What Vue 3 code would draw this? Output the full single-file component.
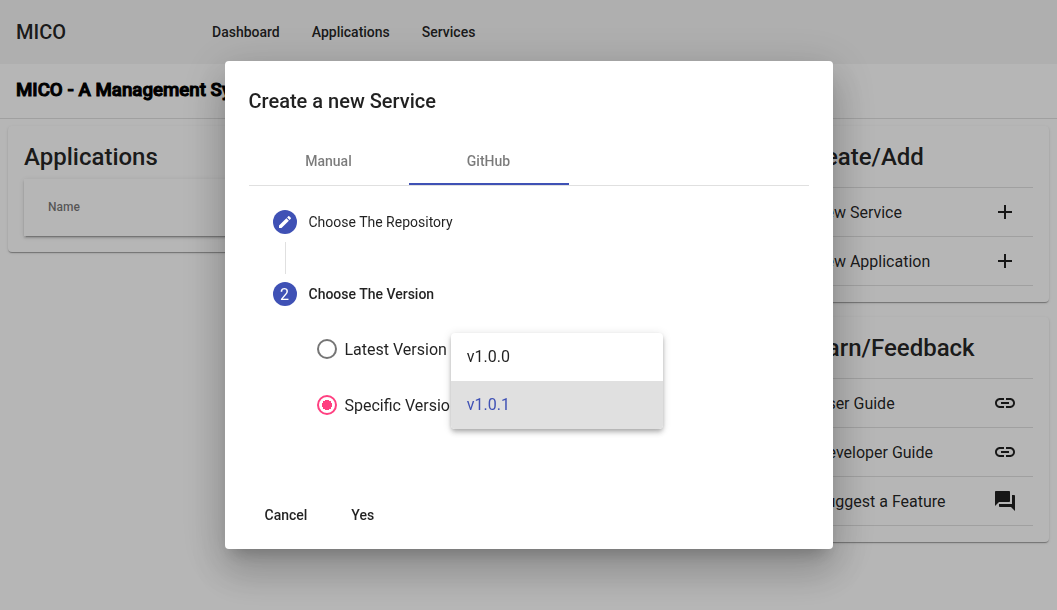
<script setup>
import { ref } from 'vue'

const navItems = ['Dashboard', 'Applications', 'Services']
const createItems = ['New Service', 'New Application']
const learnItems = [
  { text: 'User Guide', icon: 'link' },
  { text: 'Developer Guide', icon: 'link' },
  { text: 'Suggest a Feature', icon: 'forum' },
]
const icons = {
  link: 'M3.9 12c0-1.71 1.39-3.1 3.1-3.1h4V7H7c-2.76 0-5 2.24-5 5s2.24 5 5 5h4v-1.9H7c-1.71 0-3.1-1.39-3.1-3.1zM8 13h8v-2H8v2zm9-6h-4v1.9h4c1.71 0 3.1 1.39 3.1 3.1s-1.39 3.1-3.1 3.1h-4V17h4c2.76 0 5-2.24 5-5s-2.24-5-5-5z',
  forum: 'M21 6h-2v9H6v2c0 .55.45 1 1 1h11l4 4V7c0-.55-.45-1-1-1zm-4 6V3c0-.55-.45-1-1-1H3c-.55 0-1 .45-1 1v14l4-4h10c.55 0 1-.45 1-1z',
}
const tabs = ['Manual', 'GitHub']
const activeTab = ref('GitHub')
const mode = ref('specific')
const versions = ['v1.0.0', 'v1.0.1']
const version = ref('v1.0.1')
</script>

<template>
  <div class="page">
    <header class="toolbar">
      <span class="brand">MICO</span>
      <nav class="nav">
        <a v-for="item in navItems" :key="item" href="#">{{ item }}</a>
      </nav>
    </header>
    <h3 class="subtitle">MICO - A Management System</h3>

    <main class="dashboard">
      <section class="card">
        <h2>Applications</h2>
        <table class="apps">
          <thead>
            <tr><th>Name</th></tr>
          </thead>
        </table>
      </section>
      <div class="side">
        <section class="card">
          <h2>Create/Add</h2>
          <ul class="actions">
            <li v-for="item in createItems" :key="item">
              <button type="button" class="action">
                <span>{{ item }}</span>
                <svg viewBox="0 0 24 24" aria-hidden="true"><path d="M19 13h-6v6h-2v-6H5v-2h6V5h2v6h6v2z" /></svg>
              </button>
            </li>
          </ul>
        </section>
        <section class="card">
          <h2>Learn/Feedback</h2>
          <ul class="actions">
            <li v-for="item in learnItems" :key="item.text">
              <a href="#" class="action">
                <span>{{ item.text }}</span>
                <svg viewBox="0 0 24 24" aria-hidden="true"><path :d="icons[item.icon]" /></svg>
              </a>
            </li>
          </ul>
        </section>
      </div>
    </main>

    <div class="backdrop">
      <div class="dialog" role="dialog" aria-modal="true" aria-labelledby="dialog-title">
        <h2 id="dialog-title" class="dialog-title">Create a new Service</h2>
        <div class="tabs" role="tablist">
          <button
            v-for="tab in tabs"
            :key="tab"
            type="button"
            role="tab"
            :aria-selected="activeTab === tab"
            :class="['tab', { active: activeTab === tab }]"
            @click="activeTab = tab"
          >{{ tab }}</button>
        </div>

        <div class="stepper">
          <div class="step">
            <span class="step-icon">
              <svg viewBox="0 0 24 24" aria-hidden="true"><path d="M3 17.25V21h3.75L17.81 9.94l-3.75-3.75L3 17.25zM20.71 7.04c.39-.39.39-1.02 0-1.41l-2.34-2.34c-.39-.39-1.02-.39-1.41 0l-1.83 1.83 3.75 3.75 1.83-1.83z" /></svg>
            </span>
            <span>Choose The Repository</span>
          </div>
          <div class="step current">
            <span class="step-icon">2</span>
            <span>Choose The Version</span>
          </div>
          <div class="options">
            <div class="option">
              <label class="radio">
                <input v-model="mode" type="radio" name="mode" value="latest">
                <span>Latest Version</span>
              </label>
            </div>
            <div class="option">
              <label class="radio">
                <input v-model="mode" type="radio" name="mode" value="specific">
                <span>Specific Version</span>
              </label>
              <div class="version">
                <select v-model="version" aria-label="Version">
                  <option v-for="v in versions" :key="v">{{ v }}</option>
                </select>
                <ul class="panel" role="listbox" aria-label="Version">
                  <li
                    v-for="v in versions"
                    :key="v"
                    role="option"
                    :aria-selected="version === v"
                    :class="{ selected: version === v }"
                    @click="version = v"
                  >{{ v }}</li>
                </ul>
              </div>
            </div>
          </div>
        </div>

        <div class="dialog-actions">
          <button type="button">Cancel</button>
          <button type="button">Yes</button>
        </div>
      </div>
    </div>
  </div>
</template>

<style>
body {
  margin: 0;
  background: #fff;
}
</style>

<style scoped>
.page {
  min-height: 100vh;
  font-family: Roboto, "Liberation Sans", sans-serif;
  font-size: 16px;
  color: rgba(0, 0, 0, 0.87);
}
.page *,
.page *::before,
.page *::after {
  box-sizing: border-box;
}
button,
select {
  font: inherit;
  color: inherit;
  background: none;
  border: 0;
  padding: 0;
  cursor: pointer;
}
a {
  color: inherit;
  text-decoration: none;
}
ul {
  margin: 0;
  padding: 0;
  list-style: none;
}
.toolbar {
  display: flex;
  align-items: center;
  height: 64px;
  padding: 0 16px;
  background: #f5f5f5;
}
.brand {
  width: 180px;
  font-size: 20px;
  font-weight: 500;
}
.nav {
  display: flex;
  font-size: 14px;
  font-weight: 500;
}
.nav a {
  padding: 0 16px;
  line-height: 36px;
}
.subtitle {
  margin: 0;
  padding: 10px 16px 12px;
  border-bottom: 1px solid rgba(0, 0, 0, 0.12);
  line-height: 32px;
  font-weight: 500;
  color: #000;
  -webkit-text-stroke: 1px #000;
  white-space: nowrap;
  overflow: hidden;
}
.dashboard {
  display: grid;
  grid-template-columns: 3fr 264px;
  gap: 16px;
  align-items: start;
  padding: 7px 8px;
}
.side {
  display: grid;
  gap: 15px;
}
.card {
  padding: 16px;
  border-radius: 4px;
  background: #fff;
  box-shadow: 0 2px 1px -1px rgba(0, 0, 0, 0.2), 0 1px 1px rgba(0, 0, 0, 0.14), 0 1px 3px rgba(0, 0, 0, 0.12);
}
.card h2 {
  margin: 0;
  font-size: 24px;
  line-height: 30px;
  font-weight: 500;
}
.apps {
  width: 100%;
  margin-top: 7px;
  border-spacing: 0;
  box-shadow: 0 3px 1px -2px rgba(0, 0, 0, 0.2), 0 2px 2px rgba(0, 0, 0, 0.14), 0 1px 5px rgba(0, 0, 0, 0.12);
}
.apps th {
  height: 57px;
  padding: 0 24px 2px;
  text-align: left;
  font-size: 12px;
  font-weight: 500;
  color: rgba(0, 0, 0, 0.54);
}
.actions {
  margin-top: 15px;
  border-top: 1px solid rgba(0, 0, 0, 0.12);
}
.actions li {
  border-bottom: 1px solid rgba(0, 0, 0, 0.12);
}
.action {
  display: flex;
  align-items: center;
  justify-content: space-between;
  width: 100%;
  height: 48px;
  padding: 0 16px;
}
button.action {
  padding-left: 13px;
}
.action svg {
  width: 24px;
  height: 24px;
  fill: currentColor;
}
.backdrop {
  position: fixed;
  inset: 0;
  display: flex;
  align-items: center;
  justify-content: center;
  background: rgba(0, 0, 0, 0.288);
}
.dialog {
  width: 608px;
  max-width: 80vw;
  padding: 24px 24px 16px;
  border-radius: 4px;
  background: #fff;
  box-shadow: 0 11px 15px -7px rgba(0, 0, 0, 0.2), 0 24px 38px 3px rgba(0, 0, 0, 0.14), 0 9px 46px 8px rgba(0, 0, 0, 0.12);
}
.dialog-title {
  margin: 0 0 20px;
  font-size: 20px;
  line-height: 32px;
  font-weight: 500;
}
.tabs {
  display: flex;
  border-bottom: 1px solid rgba(0, 0, 0, 0.12);
}
.tab {
  width: 160px;
  height: 48px;
  border-bottom: 2px solid transparent;
  border-top: 2px solid transparent;
  font-size: 14px;
  font-weight: 500;
  color: rgba(0, 0, 0, 0.52);
}
.tab.active {
  border-bottom-color: #3f51b5;
}
.step {
  position: relative;
  display: flex;
  align-items: center;
  gap: 12px;
  height: 72px;
  padding: 0 24px;
  font-size: 14px;
}
.step.current {
  font-weight: 500;
}
.step:first-child::after {
  content: "";
  position: absolute;
  left: 36px;
  bottom: -16px;
  height: 32px;
  border-left: 1px solid rgba(0, 0, 0, 0.12);
}
.step-icon {
  display: flex;
  align-items: center;
  justify-content: center;
  width: 24px;
  height: 24px;
  border-radius: 50%;
  background: #3f51b5;
  color: #fff;
  font-size: 16px;
  font-weight: 400;
}
.step-icon svg {
  width: 16px;
  height: 16px;
  fill: currentColor;
}
.options {
  display: grid;
  gap: 18px;
  padding: 0 24px 18px 68px;
}
.option {
  display: flex;
  align-items: center;
  gap: 8px;
  height: 38px;
}
.radio {
  display: flex;
  align-items: center;
  gap: 8px;
  white-space: nowrap;
}
.radio input {
  appearance: none;
  width: 20px;
  height: 20px;
  margin: 0;
  border: 2px solid rgba(0, 0, 0, 0.54);
  border-radius: 50%;
}
.radio input:checked {
  border-color: #ff4081;
  background: radial-gradient(circle, #ff4081 5px, transparent 5px);
}
.version {
  display: flex;
  position: relative;
}
.version select {
  width: 180px;
  height: 32px;
  appearance: none;
}
.panel {
  position: absolute;
  left: -16px;
  bottom: -8px;
  width: 212px;
  overflow: hidden;
  border-radius: 4px;
  background: #fff;
  box-shadow: 0 2px 4px -1px rgba(0, 0, 0, 0.2), 0 4px 5px rgba(0, 0, 0, 0.14), 0 1px 10px rgba(0, 0, 0, 0.12);
}
.panel li {
  padding: 0 16px;
  line-height: 48px;
  cursor: pointer;
}
.panel .selected {
  background: #e0e0e0;
  color: #3f51b5;
}
.dialog-actions {
  display: flex;
  gap: 12px;
  margin-top: 55px;
}
.dialog-actions button {
  height: 36px;
  padding: 0 16px;
  font-size: 14px;
  font-weight: 500;
}
</style>
